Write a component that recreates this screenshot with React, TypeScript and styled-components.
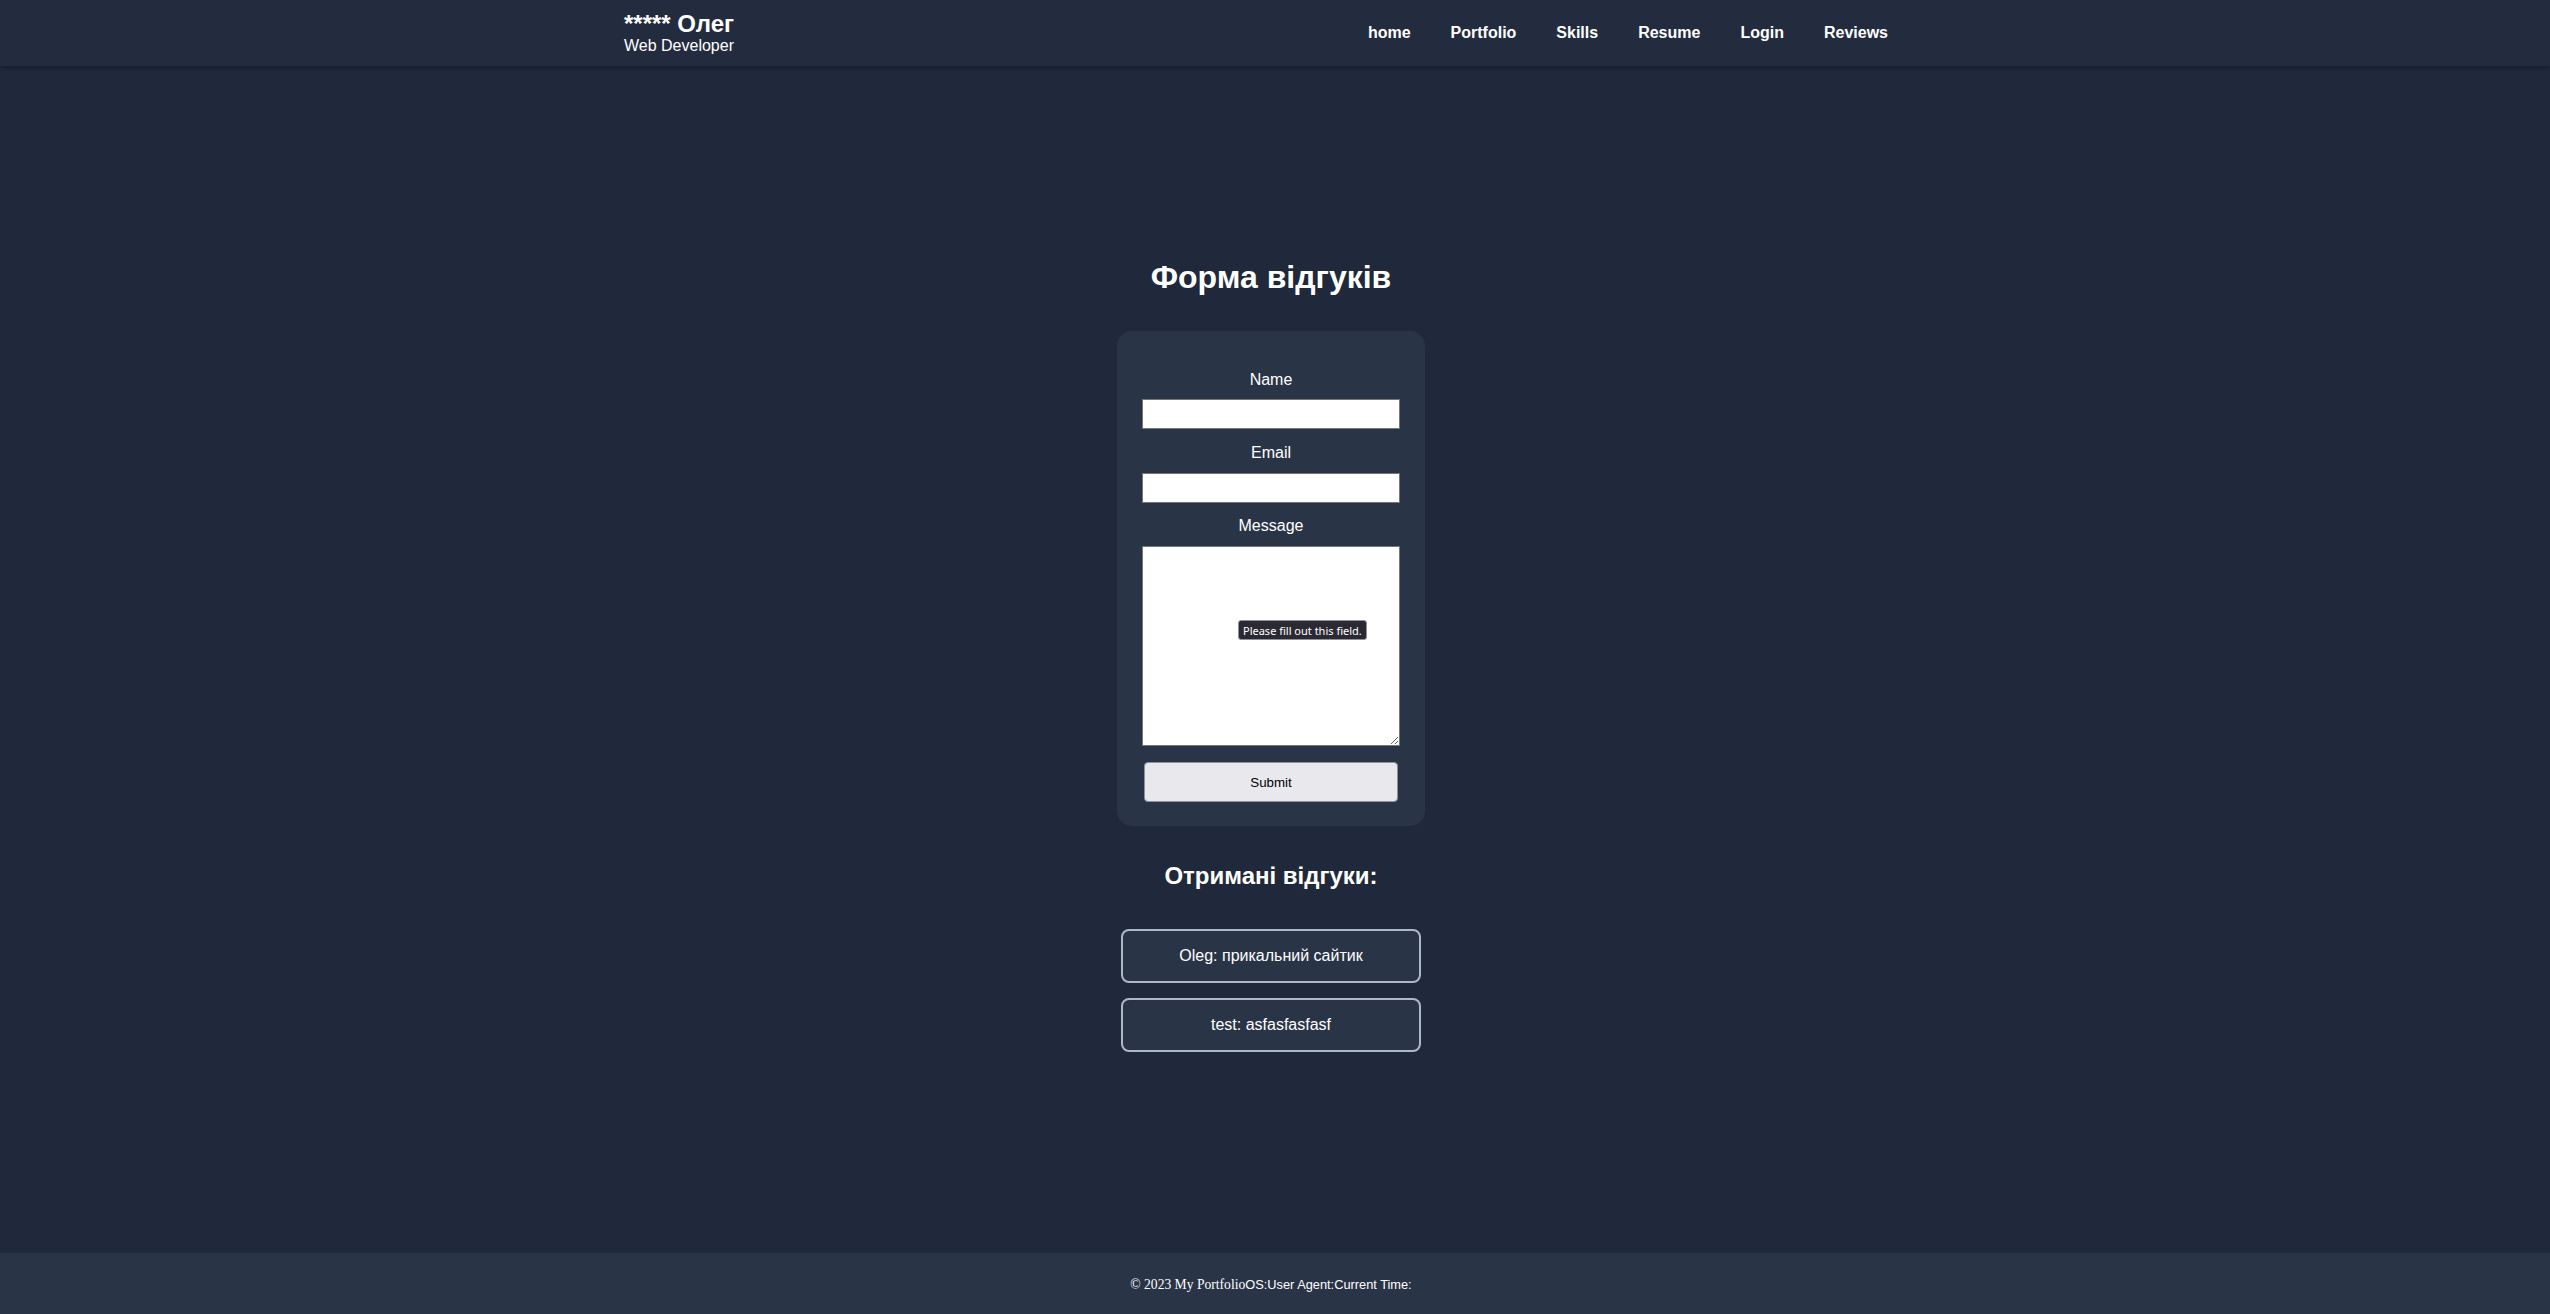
import React from "react";
import styled, { createGlobalStyle } from "styled-components";

const GlobalStyle = createGlobalStyle`
  html, body { margin: 0; padding: 0; }
  body {
    background: #1f293b;
    color: #ffffff;
    font-family: "Liberation Sans", Arial, sans-serif;
  }
  * { box-sizing: border-box; }
`;

const Page = styled.div`
  min-height: 100vh;
  display: flex;
  flex-direction: column;
`;

const Header = styled.header`
  height: 66px;
  background: #232c3e;
  box-shadow: 0 2px 4px rgba(0, 0, 0, 0.25);
  position: relative;
  z-index: 1;
`;

const HeaderInner = styled.div`
  width: 1302px;
  height: 100%;
  margin: 0 auto;
  display: flex;
  align-items: center;
  justify-content: space-between;
  padding-right: 38px;
`;

const Logo = styled.div`
  display: flex;
  flex-direction: column;
  padding-top: 1px;
`;

const LogoName = styled.span`
  font-size: 24px;
  font-weight: 700;
  line-height: 24px;
`;

const LogoRole = styled.span`
  font-size: 16px;
  line-height: 19px;
`;

const Nav = styled.nav`
  display: flex;
  gap: 40px;
`;

const NavLink = styled.a`
  color: #ffffff;
  font-weight: 700;
  font-size: 16px;
  text-decoration: none;
`;

const Main = styled.main`
  flex: 1;
  display: flex;
  flex-direction: column;
  align-items: center;
  padding-top: 193px;
  padding-bottom: 40px;
  padding-right: 8px;
`;

const Title = styled.h1`
  margin: 0 0 35px;
  font-size: 32px;
  font-weight: 700;
`;

const Card = styled.form`
  width: 308px;
  background: #2a3447;
  border-radius: 15px;
  padding: 40px 25px 24px;
  display: flex;
  flex-direction: column;
  align-items: stretch;
`;

const Label = styled.label<{ $top?: number }>`
  display: block;
  text-align: center;
  font-size: 16px;
  margin-top: ${(p) => p.$top ?? 0}px;
  margin-bottom: ${(p) => (p.$top === undefined ? 10 : 11)}px;
`;

const Input = styled.input`
  display: block;
  width: 100%;
  height: 30px;
  border: 1px solid #767676;
  background: #ffffff;
  padding: 1px 2px;
  font-size: 13.33px;
`;

const AreaWrap = styled.div`
  position: relative;
`;

const TextArea = styled.textarea`
  display: block;
  width: 100%;
  height: 200px;
  border: 1px solid #767676;
  background: #ffffff;
  font-family: "Liberation Mono", monospace;
  font-size: 13.33px;
`;

const Tooltip = styled.div`
  position: absolute;
  left: 96px;
  top: 74px;
  height: 20px;
  padding: 0 4px;
  display: flex;
  align-items: center;
  background: #2b2a33;
  color: #ffffff;
  border: 1px solid #8f8f9d;
  border-radius: 3px;
  font-family: "Noto Sans", "Open Sans", sans-serif;
  font-size: 11px;
  white-space: nowrap;
`;

const SubmitButton = styled.button`
  margin: 16px 2px 0;
  height: 40px;
  background: #e9e9ed;
  color: #000000;
  border: 1px solid #8f8f9d;
  border-radius: 4px;
  font-family: "Liberation Sans", Arial, sans-serif;
  font-size: 13.33px;
`;

const SubTitle = styled.h2`
  margin: 36px 0 39px;
  font-size: 24px;
  font-weight: 700;
`;

const ReviewList = styled.div`
  display: flex;
  flex-direction: column;
  gap: 15px;
`;

const Review = styled.div`
  width: 300px;
  height: 54px;
  border: 2px solid #aeb7c4;
  border-radius: 8px;
  background: #2a3447;
  display: flex;
  align-items: center;
  justify-content: center;
  font-size: 16px;
`;

const Footer = styled.footer`
  height: 61px;
  background: #2a3447;
  display: flex;
  align-items: center;
  justify-content: center;
  font-size: 12.8px;
  padding-top: 2px;
  padding-right: 8px;
`;

const Serif = styled.span`
  font-family: "Liberation Serif", "Times New Roman", serif;
  font-size: 13.6px;
`;

const navItems = ["home", "Portfolio", "Skills", "Resume", "Login", "Reviews"];
const reviews = [
  { name: "Oleg", text: "прикальний сайтик" },
  { name: "test", text: "asfasfasfasf" },
];

export default function App() {
  return (
    <>
      <GlobalStyle />
      <Page>
        <Header>
          <HeaderInner>
            <Logo>
              <LogoName>***** Олег</LogoName>
              <LogoRole>Web Developer</LogoRole>
            </Logo>
            <Nav>
              {navItems.map((n) => (
                <NavLink key={n} href="#">
                  {n}
                </NavLink>
              ))}
            </Nav>
          </HeaderInner>
        </Header>
        <Main>
          <Title>Форма відгуків</Title>
          <Card onSubmit={(e) => e.preventDefault()}>
            <Label>Name</Label>
            <Input type="text" />
            <Label $top={15}>Email</Label>
            <Input type="email" />
            <Label $top={14}>Message</Label>
            <AreaWrap>
              <TextArea />
              <Tooltip>Please fill out this field.</Tooltip>
            </AreaWrap>
            <SubmitButton type="submit">Submit</SubmitButton>
          </Card>
          <SubTitle>Отримані відгуки:</SubTitle>
          <ReviewList>
            {reviews.map((r) => (
              <Review key={r.name}>
                {r.name}: {r.text}
              </Review>
            ))}
          </ReviewList>
        </Main>
        <Footer>
          <Serif>© 2023 My Portfolio</Serif>
          <span>OS:User Agent:Current Time:</span>
        </Footer>
      </Page>
    </>
  );
}
